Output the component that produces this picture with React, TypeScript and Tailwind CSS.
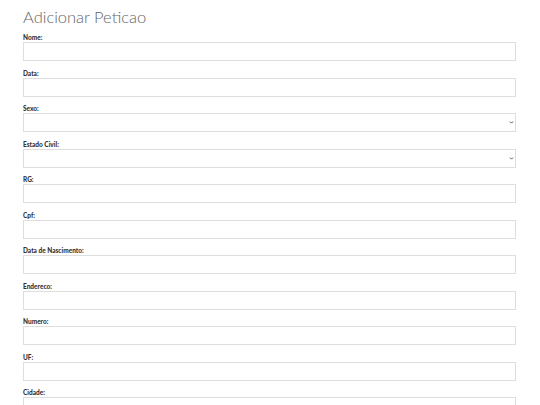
import { ChevronDown } from 'lucide-react';

interface Field {
  label: string;
  type: 'text' | 'select';
}

const fields: Field[] = [
  { label: 'Nome:', type: 'text' },
  { label: 'Data:', type: 'text' },
  { label: 'Sexo:', type: 'select' },
  { label: 'Estado Civil:', type: 'select' },
  { label: 'RG:', type: 'text' },
  { label: 'Cpf:', type: 'text' },
  { label: 'Data de Nascimento:', type: 'text' },
  { label: 'Endereco:', type: 'text' },
  { label: 'Numero:', type: 'text' },
  { label: 'UF:', type: 'text' },
  { label: 'Cidade:', type: 'text' },
];

const App = () => {
  return (
    <div className="min-h-screen bg-white pl-[23px] pr-[24px] pt-[7px]" style={{ fontFamily: 'Lato, "Liberation Sans", sans-serif' }}>
      <h1 className="text-[16.5px] leading-[20px] mb-[6px] font-light text-[#666666]">Adicionar Peticao</h1>
      <form className="flex flex-col">
        {fields.map((field) => (
          <div key={field.label} className="flex flex-col mb-[7.5px]">
            <label className="text-[6.5px] leading-[9px] font-black text-[#333333]">{field.label}</label>
            {field.type === 'select' ? (
              <div className="relative h-[19px]">
                <select className="block w-full h-[19px] border border-[#dedede] bg-white appearance-none outline-none" />
                <ChevronDown className="absolute right-[2px] top-[7px] w-[5px] h-[5px] text-[#333333]" strokeWidth={4} />
              </div>
            ) : (
              <input type="text" className="block w-full h-[19px] border border-[#dedede] bg-white outline-none" />
            )}
          </div>
        ))}
      </form>
    </div>
  );
};

export default App;
